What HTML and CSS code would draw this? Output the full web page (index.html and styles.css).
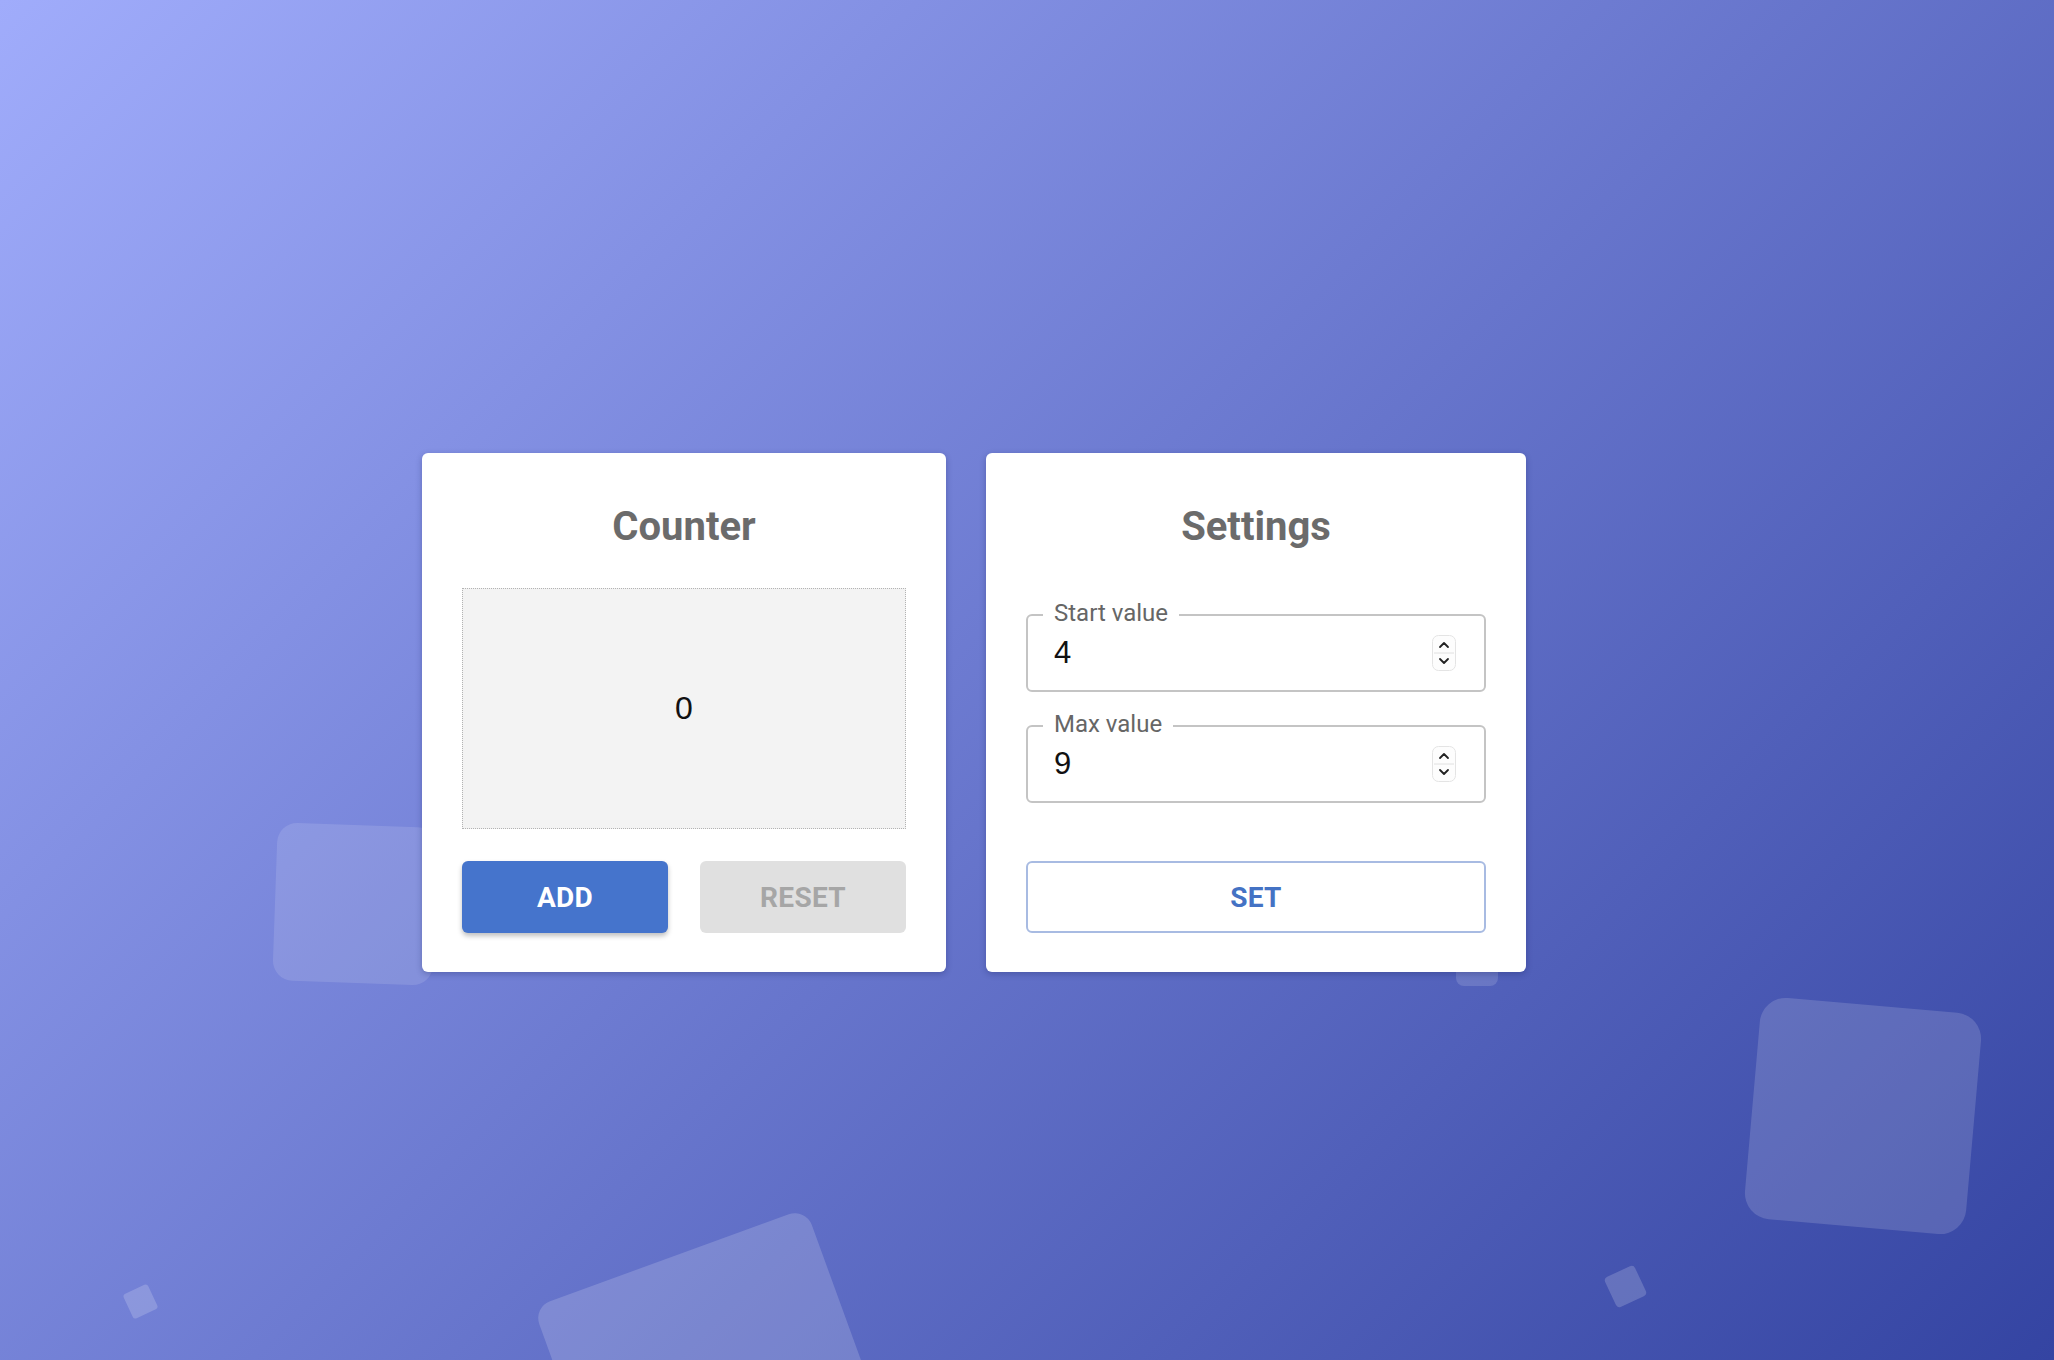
FILE: index.html
```html
<!DOCTYPE html>
<html lang="en">
<head>
<meta charset="utf-8">
<title>Counter</title>
<link rel="stylesheet" href="styles.css">
</head>
<body>
<div class="deco" aria-hidden="true">
  <div class="shape s1"></div>
  <div class="shape s2"></div>
  <div class="shape s3"></div>
  <div class="shape s4"></div>
  <div class="shape s5"></div>
  <div class="shape s6"></div>
</div>
<main class="board">
  <section class="card counter">
    <h2 class="card-title">Counter</h2>
    <div class="display">0</div>
    <div class="actions">
      <button class="btn btn-primary">ADD</button>
      <button class="btn btn-disabled">RESET</button>
    </div>
  </section>
  <section class="card settings">
    <h2 class="card-title">Settings</h2>
    <div class="fields">
      <div class="field">
        <span class="field-label">Start value</span>
        <span class="field-value">4</span>
        <svg class="spinner" width="24" height="36" viewBox="0 0 24 36"><rect x="0.5" y="0.5" width="23" height="35" rx="6" fill="#fdfdfd" stroke="#e4e4e4"/><line x1="2" y1="18" x2="22" y2="18" stroke="#e0e0e0"/><path d="M8 12 L12 8 L16 12" fill="none" stroke="#222" stroke-width="1.8" stroke-linecap="round" stroke-linejoin="round"/><path d="M8 24 L12 28 L16 24" fill="none" stroke="#222" stroke-width="1.8" stroke-linecap="round" stroke-linejoin="round"/></svg>
      </div>
      <div class="field">
        <span class="field-label">Max value</span>
        <span class="field-value">9</span>
        <svg class="spinner" width="24" height="36" viewBox="0 0 24 36"><rect x="0.5" y="0.5" width="23" height="35" rx="6" fill="#fdfdfd" stroke="#e4e4e4"/><line x1="2" y1="18" x2="22" y2="18" stroke="#e0e0e0"/><path d="M8 12 L12 8 L16 12" fill="none" stroke="#222" stroke-width="1.8" stroke-linecap="round" stroke-linejoin="round"/><path d="M8 24 L12 28 L16 24" fill="none" stroke="#222" stroke-width="1.8" stroke-linecap="round" stroke-linejoin="round"/></svg>
      </div>
    </div>
    <button class="btn btn-outline">SET</button>
  </section>
</main>
</body>
</html>
```
FILE: styles.css
```css
html, body {
  margin: 0;
  padding: 0;
}

html {
  overflow: hidden;
}

body {
  position: relative;
  width: 2054px;
  height: 1360px;
  overflow: hidden;
  background: linear-gradient(135deg, #a0acfb 0%, #3444a2 100%);
  font-family: Roboto, "Liberation Sans", sans-serif;
}

.deco {
  position: absolute;
  inset: 0;
  z-index: 0;
  overflow: hidden;
}

.shape {
  position: absolute;
  background: rgba(255, 255, 255, 0.14);
  border-radius: 20px;
}

.s1 { left: 275px; top: 825px; width: 160px; height: 158px; transform: rotate(2deg); background: rgba(255,255,255,0.12); }
.s2 { left: 1752px; top: 1005px; width: 222px; height: 222px; border-radius: 26px; transform: rotate(5deg); background: rgba(255,255,255,0.15); }
.s3 { left: 574px; top: 1249px; width: 290px; height: 290px; border-radius: 18px; transform: rotate(-20deg); background: rgba(255,255,255,0.17); }
.s4 { left: 127px; top: 1288px; width: 27px; height: 27px; border-radius: 3px; transform: rotate(-25deg); background: rgba(255,255,255,0.18); }
.s5 { left: 1609px; top: 1270px; width: 33px; height: 33px; border-radius: 4px; transform: rotate(-25deg); background: rgba(255,255,255,0.18); }
.s6 { left: 1456px; top: 944px; width: 42px; height: 42px; border-radius: 8px; background: rgba(255,255,255,0.14); }

.board {
  position: relative;
  z-index: 1;
  display: flex;
  gap: 40px;
  padding: 453px 0 0 422px;
}

.card {
  box-sizing: border-box;
  height: 519px;
  padding: 50px 40px 39px;
  background: #fff;
  border-radius: 6px;
  box-shadow: 0 2px 6px rgba(20, 30, 90, 0.3);
  display: flex;
  flex-direction: column;
}

.counter { width: 524px; }
.settings { width: 540px; }

.card-title {
  margin: 0;
  font-size: 40px;
  line-height: 48px;
  font-weight: 700;
  color: #6b6b6b;
  text-align: center;
}

.display {
  box-sizing: border-box;
  margin-top: 37px;
  height: 241px;
  border: 1px dotted #b3b3b3;
  background: #f3f3f3;
  display: flex;
  align-items: center;
  justify-content: center;
  font-family: "Liberation Sans", Arial, sans-serif;
  font-size: 32px;
  color: #111;
}

.actions {
  margin-top: 32px;
  display: grid;
  grid-template-columns: 1fr 1fr;
  gap: 32px;
}

.btn {
  box-sizing: border-box;
  height: 72px;
  border: none;
  border-radius: 6px;
  font-family: Roboto, "Liberation Sans", sans-serif;
  font-size: 28px;
  font-weight: 700;
  letter-spacing: 0.3px;
  cursor: pointer;
}

.btn-primary {
  background: #4574cc;
  color: #fff;
  box-shadow: 0 3px 5px rgba(0, 0, 0, 0.25);
}

.btn-disabled {
  background: #e0e0e0;
  color: #a6a6a6;
}

.btn-outline {
  margin-top: auto;
  width: 100%;
  background: #fff;
  border: 2px solid #a8bbe2;
  color: #4472c4;
}

.fields {
  margin-top: 63px;
  display: flex;
  flex-direction: column;
  gap: 33px;
}

.field {
  position: relative;
  box-sizing: border-box;
  height: 78px;
  border: 2px solid #c4c4c4;
  border-radius: 6px;
  display: flex;
  align-items: center;
  padding: 0 28px 0 26px;
}

.field-label {
  position: absolute;
  left: 15px;
  top: -17px;
  padding: 0 11px;
  background: #fff;
  font-size: 24px;
  line-height: 28px;
  color: #666;
}

.field-value {
  flex: 1;
  font-family: "Liberation Sans", Arial, sans-serif;
  font-size: 31px;
  color: #111;
}

.spinner {
  display: block;
  flex: none;
}
```
